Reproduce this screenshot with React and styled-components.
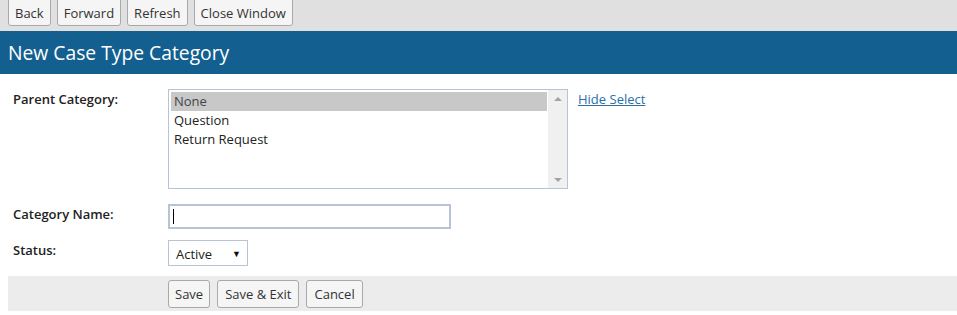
import React from 'react';
import styled, { createGlobalStyle } from 'styled-components';

const GlobalStyle = createGlobalStyle`
  html, body {
    margin: 0;
    padding: 0;
    background: #ffffff;
    font-family: "Open Sans", "Liberation Sans", sans-serif;
    font-size: 13px;
    color: #222222;
  }
`;

const Toolbar = styled.div`
  display: flex;
  gap: 6px;
  align-items: flex-end;
  height: 31px;
  padding: 0 8px;
  background: #e0e0e0;
  box-sizing: border-box;
`;

const Button = styled.button`
  font-family: "Open Sans", "Liberation Sans", sans-serif;
  font-size: 13px;
  color: #333333;
  background: #f5f5f5;
  border: 1px solid #a9a9a9;
  border-radius: 3px;
  padding: 0 ${p => p.$pad || 6}px;
  height: 28px;
  cursor: pointer;
`;

const TopButton = styled(Button)`
  height: 30px;
  padding-top: 4px;
  margin-bottom: 5px;
  border-top-left-radius: 0;
  border-top-right-radius: 0;
`;

const Header = styled.h1`
  margin: 0;
  height: 43px;
  display: flex;
  align-items: center;
  padding: 0 8px;
  background: #135f90;
  color: #ffffff;
  font-size: 19.3px;
  font-weight: 400;
`;

const Form = styled.div`
  display: grid;
  grid-template-columns: 155px 1fr;
  row-gap: 11px;
  padding: 15px 0 0 13px;
`;

const Label = styled.label`
  font-weight: 600;
  font-size: 13px;
  padding-top: 1px;
  color: #222222;
`;

const FieldRow = styled.div`
  display: flex;
  align-items: flex-start;
  gap: 10px;
  margin-bottom: 4px;
`;

const ListBox = styled.div`
  width: 400px;
  height: 100px;
  box-sizing: border-box;
  border: 1px solid #b7c4d8;
  display: flex;
`;

const Options = styled.div`
  flex: 1;
  padding: 2px 1px 0 2px;
`;

const Option = styled.div`
  height: 19px;
  line-height: 19px;
  padding-left: 3px;
  background: ${p => (p.$selected ? '#c8c8c8' : 'transparent')};
  color: ${p => (p.$selected ? '#444444' : '#222222')};
`;

const ScrollBar = styled.div`
  width: 19px;
  background: #f0f0f0;
  display: flex;
  flex-direction: column;
  justify-content: space-between;
  align-items: center;
  padding: 7px 0 6px;
`;

const Arrow = styled.div`
  width: 0;
  height: 0;
  border-left: 4px solid transparent;
  border-right: 4px solid transparent;
  ${p => (p.$down ? 'border-top: 4px solid #a3a3a3;' : 'border-bottom: 4px solid #a3a3a3;')}
`;

const Link = styled.a`
  color: #2a6fa8;
  text-decoration: underline;
  font-size: 13px;
  margin-top: 1px;
  cursor: pointer;
`;

const TextInput = styled.div`
  width: 283px;
  height: 25px;
  box-sizing: border-box;
  border: 2px solid #b7c4d8;
  display: flex;
  align-items: center;
  padding-left: 3px;
`;

const Caret = styled.div`
  width: 1px;
  height: 15px;
  background: #000000;
`;

const SelectBox = styled.div`
  width: 80px;
  height: 26px;
  box-sizing: border-box;
  border: 1px solid #b7c4d8;
  display: flex;
  align-items: center;
  justify-content: space-between;
  padding: 2px 6px 0 7px;
  color: #222222;
  font-size: 13px;
`;

const DropArrow = styled.span`
  font-size: 9px;
  color: #111111;
  margin-top: -2px;
`;

const Footer = styled.div`
  margin: 10px 0 0 8px;
  height: 35px;
  background: #ececec;
  display: flex;
  align-items: center;
  gap: 7px;
  padding-left: 160px;
`;

export default function App() {
  return (
    <>
      <GlobalStyle />
      <Toolbar>
        <TopButton>Back</TopButton>
        <TopButton>Forward</TopButton>
        <TopButton>Refresh</TopButton>
        <TopButton>Close Window</TopButton>
      </Toolbar>
      <Header>New Case Type Category</Header>
      <Form>
        <Label>Parent Category:</Label>
        <FieldRow>
          <ListBox>
            <Options>
              <Option $selected>None</Option>
              <Option>Question</Option>
              <Option>Return Request</Option>
            </Options>
            <ScrollBar>
              <Arrow />
              <Arrow $down />
            </ScrollBar>
          </ListBox>
          <Link>Hide Select</Link>
        </FieldRow>
        <Label>Category Name:</Label>
        <TextInput>
          <Caret />
        </TextInput>
        <Label>Status:</Label>
        <SelectBox>
          Active
          <DropArrow>▼</DropArrow>
        </SelectBox>
      </Form>
      <Footer>
        <Button>Save</Button>
        <Button $pad={7}>Save &amp; Exit</Button>
        <Button $pad={7}>Cancel</Button>
      </Footer>
    </>
  );
}
